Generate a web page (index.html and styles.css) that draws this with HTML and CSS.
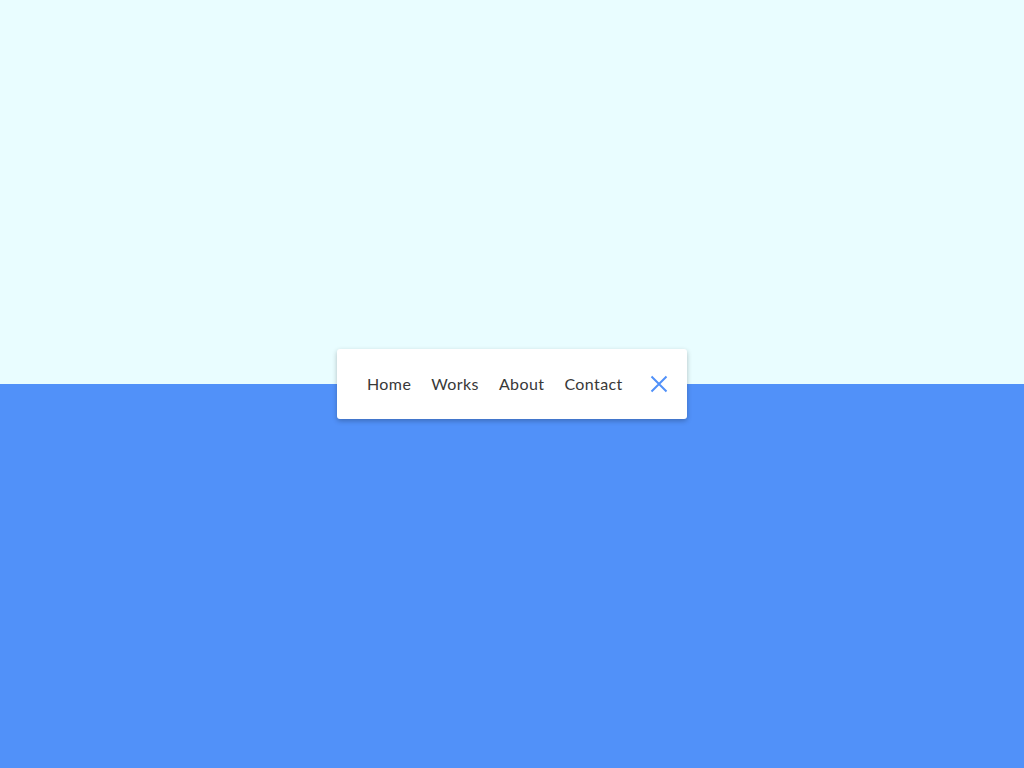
FILE: index.html
```html
<!DOCTYPE html>
<html lang="en">
<head>
<meta charset="utf-8">
<title>Menu</title>
<link rel="stylesheet" href="styles.css">
</head>
<body>
<div class="page">
  <div class="half top"></div>
  <div class="half bottom"></div>
  <nav class="menu">
    <a class="link" href="#">Home</a>
    <a class="link" href="#">Works</a>
    <a class="link" href="#">About</a>
    <a class="link" href="#">Contact</a>
    <button class="close" aria-label="Close">
      <svg width="18" height="18" viewBox="0 0 18 18"><path d="M1.5 1.5L16.5 16.5M16.5 1.5L1.5 16.5" stroke="#5191f9" stroke-width="2" fill="none"/></svg>
    </button>
  </nav>
</div>
</body>
</html>
```
FILE: styles.css
```css
html, body { margin: 0; padding: 0; }
body { font-family: Lato, "Noto Sans", sans-serif; }
.page {
  position: relative;
  width: 1024px;
  height: 768px;
  display: grid;
  grid-template-rows: 384px 384px;
}
.top { background: #e9fdff; }
.bottom { background: #5191f9; }
.menu {
  position: absolute;
  left: 337px;
  top: 349px;
  width: 350px;
  height: 70px;
  box-sizing: border-box;
  background: #fff;
  border-radius: 3px;
  box-shadow: 0 2px 5px rgba(0,0,0,0.25);
  display: flex;
  align-items: center;
  padding: 0 19px 0 30px;
  gap: 20px;
}
.link {
  color: #383838;
  text-decoration: none;
  font-size: 16px;
  line-height: 20px;
  letter-spacing: 0.4px;
}
.close {
  margin-left: auto;
  border: 0;
  background: none;
  padding: 0;
  width: 18px;
  height: 18px;
  display: flex;
  cursor: pointer;
}
```
